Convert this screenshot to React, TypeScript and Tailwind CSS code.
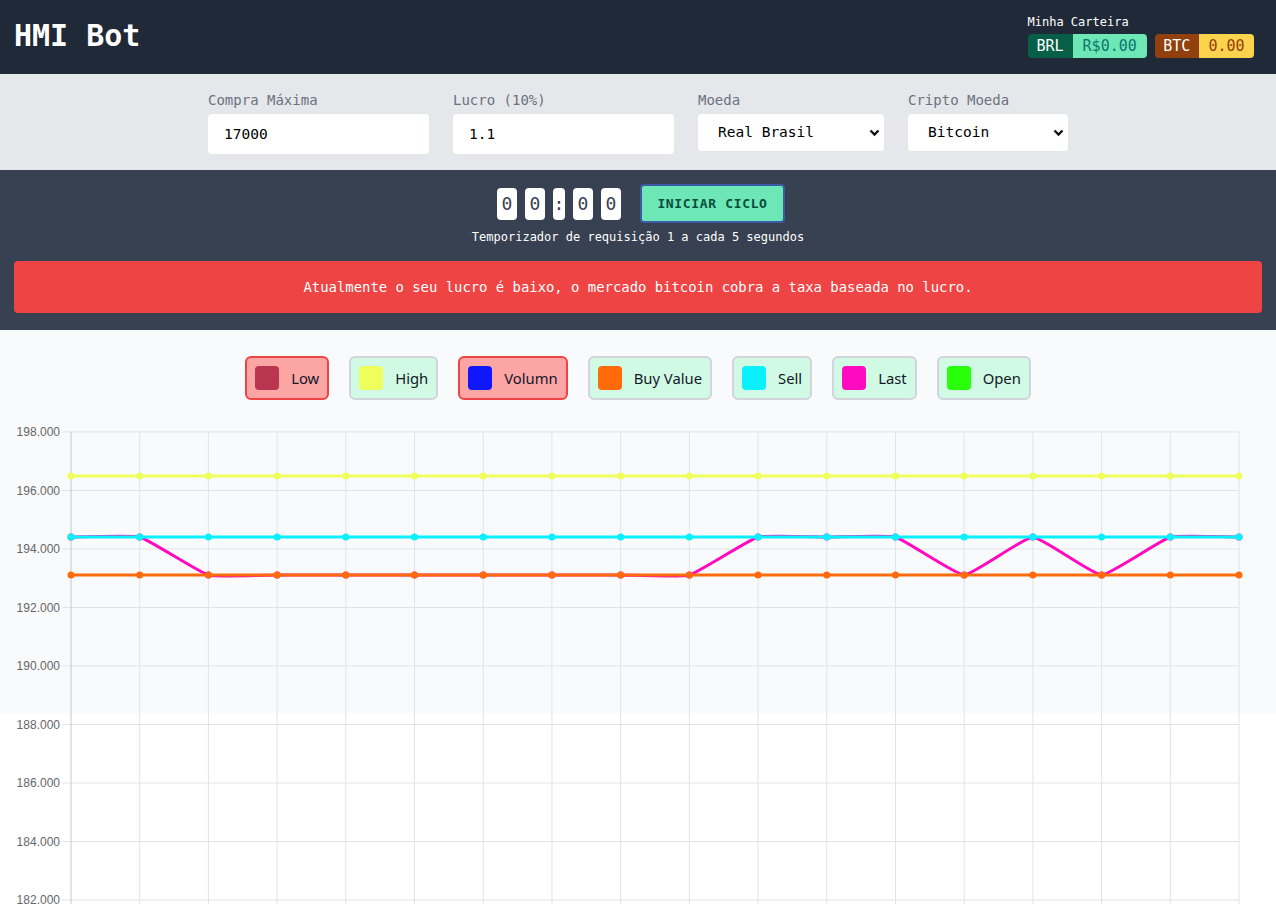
import React from "react";

const mono = { fontFamily: '"DejaVu Sans Mono", "Liberation Mono", monospace' };

interface Series {
  label: string;
  color: string;
  hidden: boolean;
  data: number[];
}

const HI = 196.5;
const SELL = 194.41;
const BUY = 193.11;

const series: Series[] = [
  { label: "Low", color: "#b93550", hidden: true, data: [] },
  { label: "High", color: "#eeff5b", hidden: false, data: Array(18).fill(HI) },
  { label: "Volumn", color: "#0f17ff", hidden: true, data: [] },
  { label: "Buy Value", color: "#ff6b0a", hidden: false, data: Array(18).fill(BUY) },
  { label: "Sell", color: "#0af0ff", hidden: false, data: Array(18).fill(SELL) },
  {
    label: "Last",
    color: "#ff0ac0",
    hidden: false,
    data: [SELL, SELL, BUY, BUY, BUY, BUY, BUY, BUY, BUY, BUY, SELL, SELL, SELL, BUY, SELL, BUY, SELL, SELL],
  },
  { label: "Open", color: "#2aff0a", hidden: false, data: [] },
];

// chart geometry (svg starts at page y=420)
const X0 = 71;
const X1 = 1239;
const STEP = (X1 - X0) / 17;
const yOf = (v: number) => 12 + (198 - v) * 29.25;
const xOf = (i: number) => X0 + i * STEP;

// chart.js style spline, small tension
function splinePath(pts: [number, number][]) {
  const t = 0.12;
  const cps = pts.map((p, i) => {
    const prev = pts[i - 1] || p;
    const next = pts[i + 1] || p;
    const d01 = Math.hypot(p[0] - prev[0], p[1] - prev[1]);
    const d12 = Math.hypot(next[0] - p[0], next[1] - p[1]);
    let s01 = d01 / (d01 + d12);
    let s12 = d12 / (d01 + d12);
    if (isNaN(s01)) s01 = 0;
    if (isNaN(s12)) s12 = 0;
    const fa = t * s01;
    const fb = t * s12;
    return {
      prev: [p[0] - fa * (next[0] - prev[0]), p[1] - fa * (next[1] - prev[1])],
      next: [p[0] + fb * (next[0] - prev[0]), p[1] + fb * (next[1] - prev[1])],
    };
  });
  let d = `M${pts[0][0]},${pts[0][1]}`;
  for (let i = 1; i < pts.length; i++) {
    const a = cps[i - 1].next;
    const b = cps[i].prev;
    d += ` C${a[0]},${a[1]} ${b[0]},${b[1]} ${pts[i][0]},${pts[i][1]}`;
  }
  return d;
}

const ticks = [198, 196, 194, 192, 190, 188, 186, 184, 182];

function Chart() {
  // chart.js draws the first dataset on top
  const drawn = [...series].reverse().filter((s) => !s.hidden && s.data.length);
  return (
    <svg width="1276" height="500" className="block overflow-visible">
      {ticks.map((v) => (
        <g key={v}>
          <line x1={62} x2={X1} y1={yOf(v)} y2={yOf(v)} stroke="#e3e3e3" strokeWidth={1} />
          <text
            x={60}
            y={yOf(v) + 4}
            textAnchor="end"
            fontSize="12"
            fill="#666"
            style={{ fontFamily: '"Liberation Sans", Arial, sans-serif' }}
          >
            {v.toFixed(3)}
          </text>
        </g>
      ))}
      {Array.from({ length: 18 }).map((_, i) => (
        <line
          key={i}
          x1={xOf(i)}
          x2={xOf(i)}
          y1={12}
          y2={500}
          stroke={i === 0 ? "#c8c8c8" : "#e3e3e3"}
          strokeWidth={1}
        />
      ))}
      {drawn.map((s) => {
        const pts = s.data.map((v, i) => [xOf(i), yOf(v)] as [number, number]);
        return (
          <g key={s.label}>
            <path d={splinePath(pts)} fill="none" stroke={s.color} strokeWidth={3} />
            {pts.map((p, i) => (
              <circle key={i} cx={p[0]} cy={p[1]} r={3.5} fill={s.color} />
            ))}
          </g>
        );
      })}
    </svg>
  );
}

function Chevron() {
  return (
    <svg width="11" height="8" viewBox="0 0 11 8" className="absolute right-[4px] top-1/2 -translate-y-1/2 pointer-events-none">
      <polyline points="1.5,1.5 5.5,5.5 9.5,1.5" fill="none" stroke="#111" strokeWidth="2.4" />
    </svg>
  );
}

export default function App() {
  return (
    <div className="min-h-[904px] bg-white" style={mono}>
      {/* Header */}
      <header className="h-[74px] bg-[#1f2937] flex items-start justify-between px-[14px]">
        <h1 className="text-[30px] font-bold text-white mt-[17px] leading-[38px]">HMI Bot</h1>
        <div className="mt-[15px] mr-[8px]">
          <div className="text-[12px] leading-[15px] text-white">Minha Carteira</div>
          <div className="flex gap-2 mt-[4px] text-[15px] leading-[24px]" style={mono}>
            <div className="flex rounded overflow-hidden">
              <span className="bg-[#065f46] text-white px-[9px]">BRL</span>
              <span className="bg-[#6ee7b7] text-[#0f766e] px-[10px]">R$0.00</span>
            </div>
            <div className="flex rounded overflow-hidden">
              <span className="bg-[#92400e] text-white px-[8.5px]">BTC</span>
              <span className="bg-[#fcd34d] text-[#92400e] px-[9.5px]">0.00</span>
            </div>
          </div>
        </div>
      </header>

      {/* Form */}
      <section className="h-[96px] bg-[#e5e7eb] flex justify-center gap-6 pt-[18px]">
        <label className="flex flex-col">
          <span className="text-[14px] leading-[16px] text-[#6b7280] mb-[6px]">Compra Máxima</span>
          <input
            defaultValue="17000"
            className="w-[221px] h-[40px] rounded bg-white px-4 text-[14.5px] text-black outline-none"
            style={mono}
          />
        </label>
        <label className="flex flex-col">
          <span className="text-[14px] leading-[16px] text-[#6b7280] mb-[6px]">Lucro (10%)</span>
          <input
            defaultValue="1.1"
            className="w-[221px] h-[40px] rounded bg-white px-4 text-[14.5px] text-black outline-none"
            style={mono}
          />
        </label>
        <label className="flex flex-col">
          <span className="text-[14px] leading-[16px] text-[#6b7280] mb-[6px]">Moeda</span>
          <div className="relative">
            <select
              className="appearance-none w-[186px] h-[37px] rounded bg-white pl-5 text-[14.5px] text-black outline-none"
              style={mono}
            >
              <option>Real Brasil</option>
            </select>
            <Chevron />
          </div>
        </label>
        <label className="flex flex-col">
          <span className="text-[14px] leading-[16px] text-[#6b7280] mb-[6px]">Cripto Moeda</span>
          <div className="relative">
            <select
              className="appearance-none w-[160px] h-[37px] rounded bg-white pl-5 text-[14.5px] text-black outline-none"
              style={mono}
            >
              <option>Bitcoin</option>
            </select>
            <Chevron />
          </div>
        </label>
      </section>

      {/* Timer */}
      <section className="h-[160px] bg-[#374151] px-[14px] pt-[14px]">
        <div className="flex justify-center items-center pl-[6px]">
          <div className="flex items-center gap-2 text-[18px] text-[#374151]">
            {["0", "0"].map((d, i) => (
              <span key={i} className="w-[20px] h-[32px] bg-white rounded flex items-center justify-center">{d}</span>
            ))}
            <span className="w-[12px] h-[32px] bg-white rounded flex items-center justify-center">:</span>
            {["0", "0"].map((d, i) => (
              <span key={i} className="w-[20px] h-[32px] bg-white rounded flex items-center justify-center">{d}</span>
            ))}
          </div>
          <button
            className="ml-[19px] w-[145px] h-[39px] rounded bg-[#6ee7b7] border-2 border-[#3b5ba5] text-[13px] font-semibold tracking-wider text-[#064e3b]"
            style={mono}
          >
            INICIAR CICLO
          </button>
        </div>
        <p className="text-center text-white text-[12px] leading-[15px] mt-[7px]">
          Temporizador de requisição 1 a cada 5 segundos
        </p>
        <div className="mt-[16px] h-[52px] rounded bg-[#ef4444] flex items-center justify-center text-white text-[13.9px]">
          Atualmente o seu lucro é baixo, o mercado bitcoin cobra a taxa baseada no lucro.
        </div>
      </section>

      {/* Chart */}
      <section className="h-[383px] bg-[#f9fafb] pt-[26px]">
        <div
          className="flex justify-center gap-[20px] text-[14.8px] text-[#111827]"
          style={{ fontFamily: '"Noto Sans", "Open Sans", sans-serif' }}
        >
          {series.map((s) => (
            <div
              key={s.label}
              className={
                s.hidden
                  ? "h-[44px] flex items-center pl-[8px] pr-[8px] border-2 rounded-md bg-[#fca5a5] border-[#ef4444]"
                  : "h-[44px] flex items-center pl-[8px] pr-[8px] border-2 rounded-md bg-[#d1fae5] border-[#d1d5db]"
              }
            >
              <span className="w-[24px] h-[24px] rounded" style={{ backgroundColor: s.color }} />
              <span className="ml-[12px]">{s.label}</span>
            </div>
          ))}
        </div>
        <div className="mt-[20px]">
          <Chart />
        </div>
      </section>
    </div>
  );
}
